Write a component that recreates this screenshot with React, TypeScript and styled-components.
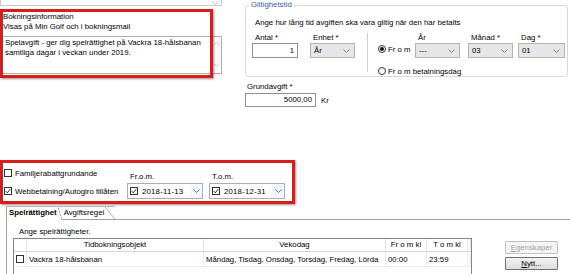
import React from 'react'
import styled, { createGlobalStyle } from 'styled-components'

const GlobalStyle = createGlobalStyle`
  html, body { margin: 0; padding: 0; background: #fff; }
  body {
    font-family: "Liberation Sans", Arial, sans-serif;
    font-size: 7.8px;
    color: #000;
  }
  * { box-sizing: border-box; }
`

const Page = styled.div`
  position: relative;
  width: 570px;
  height: 274px;
  overflow: hidden;
  background: #fff;
`

const TopArea = styled.div`
  display: flex;
  height: 160px;
`

const InfoColumn = styled.div`
  position: relative;
  width: 222px;
  display: flex;
  flex-direction: column;
`

const Stub = styled.div`
  height: 6px;
  border: 1px solid #c9cbd0;
  border-top: none;
  display: flex;
  justify-content: flex-end;
  align-items: center;
  padding-right: 2px;
`

const InfoLabels = styled.div`
  margin-top: 6px;
  padding-left: 3px;
`

const Line = styled.div`
  height: 10px;
  line-height: 10px;
  white-space: nowrap;
`

const TextArea = styled.div`
  margin-top: 4px;
  height: 38px;
  border: 1px solid #abadb3;
  display: flex;
`

const TextBody = styled.div`
  flex: 1;
  padding: 1px 4px;
  line-height: 10px;
`

const ScrollBar = styled.div`
  width: 10px;
  display: flex;
  flex-direction: column;
  justify-content: space-between;
  align-items: center;
  padding: 5px 0 6px;
`

const Highlight = styled.div<{ $top: number; $width: number; $height: number }>`
  position: absolute;
  top: ${p => p.$top}px;
  left: 0;
  width: ${p => p.$width}px;
  height: ${p => p.$height}px;
  border: 3px solid #d81d1d;
  box-shadow: 1px 1px 2px rgba(60, 0, 0, 0.45);
  pointer-events: none;
`

const SettingsColumn = styled.div`
  margin-left: 23px;
  width: 323px;
`

const Group = styled.fieldset`
  margin: 0;
  padding: 0 0 0 6px;
  min-width: 0;
  height: 77px;
  border: 1px solid #d8d8d8;
  border-radius: 3px;
`

const GroupTitle = styled.legend`
  margin-left: -3px;
  padding: 0 2px;
  line-height: 10px;
  color: #3561a8;
`

const Intro = styled.div`
  margin-top: 8px;
  padding-left: 3px;
  line-height: 10px;
  white-space: nowrap;
`

const FieldRow = styled.div`
  display: flex;
  align-items: flex-start;
  margin-top: 5px;
`

const Field = styled.div<{ $width: number; $gap?: number }>`
  display: flex;
  flex-direction: column;
  width: ${p => p.$width}px;
  margin-left: ${p => p.$gap ?? 0}px;
`

const FieldLabel = styled.div`
  height: 10px;
  line-height: 10px;
  padding-left: 3px;
  white-space: nowrap;
`

const TextInput = styled.div<{ $height?: number }>`
  height: ${p => p.$height ?? 15}px;
  border: 1px solid #8e9096;
  background: #fff;
  text-align: right;
  padding-right: 3px;
  line-height: ${p => (p.$height ?? 15) - 2}px;
`

const Select = styled.div`
  height: 15px;
  border: 1px solid #b3b3b3;
  background: #e6e6e6;
  display: flex;
  align-items: center;
  justify-content: space-between;
  padding: 0 4px 0 3px;
`

const Divider = styled.div`
  width: 1px;
  height: 39px;
  margin-left: 12px;
  background: #d0d0d0;
`

const RadioArea = styled.div`
  display: flex;
  flex-direction: column;
  margin-left: 10px;
`

const RadioLine = styled.div`
  display: flex;
  align-items: flex-end;
`

const RadioOption = styled.div<{ $width?: number }>`
  display: flex;
  align-items: center;
  gap: 2px;
  height: 15px;
  padding-bottom: 3px;
  width: ${p => (p.$width ? `${p.$width}px` : 'auto')};
  white-space: nowrap;
`

const RadioSecond = styled(RadioOption)`
  margin-top: 8px;
  height: 10px;
  padding-bottom: 0;
`

const RadioDot = styled.span<{ $on?: boolean }>`
  width: 8px;
  height: 8px;
  border: 1px solid #333;
  border-radius: 50%;
  display: flex;
  align-items: center;
  justify-content: center;
  background: #fff;
  &::after {
    content: '';
    width: 4px;
    height: 4px;
    border-radius: 50%;
    background: ${p => (p.$on ? '#111' : 'transparent')};
  }
`

const BaseFee = styled.div`
  margin-top: 5px;
`

const BaseLabel = styled.div`
  line-height: 10px;
  padding-left: 2px;
`

const BaseRow = styled.div`
  display: flex;
  align-items: center;
  margin-top: 1px;
  gap: 5px;
`

const OptionsArea = styled.div`
  position: relative;
  height: 46px;
  display: flex;
  padding: 8px 0 0 4px;
`

const CheckColumn = styled.div`
  width: 123px;
  display: flex;
  flex-direction: column;
  gap: 8px;
`

const CheckLine = styled.div`
  height: 10px;
  display: flex;
  align-items: center;
  gap: 3px;
  white-space: nowrap;
`

const Box = styled.span`
  width: 8px;
  height: 8px;
  flex: none;
  border: 1px solid #333;
  background: #fff;
  display: flex;
  align-items: center;
  justify-content: center;
`

const DateField = styled.div<{ $gap?: number }>`
  width: 76px;
  margin-left: ${p => p.$gap ?? 0}px;
  display: flex;
  flex-direction: column;
`

const DateLabel = styled.div`
  margin-top: 4px;
  line-height: 10px;
  padding-left: 3px;
`

const DatePicker = styled.div`
  margin-top: 1px;
  height: 16px;
  border: 1px solid #abadb3;
  display: flex;
  align-items: center;
  gap: 4px;
  padding-left: 2px;
  letter-spacing: 0.2px;
`

const DropButton = styled.span`
  margin-left: auto;
  width: 12px;
  height: 14px;
  display: flex;
  align-items: center;
  justify-content: center;
  background: #f4f7fb;
`

const TabStrip = styled.div`
  display: flex;
  align-items: flex-end;
  height: 13px;
  padding-left: 6px;
`

const Tab = styled.div<{ $active?: boolean; $slant: number }>`
  position: relative;
  height: ${p => (p.$active ? 14 : 13)}px;
  margin-bottom: ${p => (p.$active ? -1 : 0)}px;
  line-height: 12px;
  padding: 0 ${p => p.$slant + 1}px 0 2px;
  font-weight: ${p => (p.$active ? 700 : 400)};
  background: #fff;
  border-top: 1px solid #b4b4b4;
  border-left: ${p => (p.$active ? '1px solid #a0a0a0' : 'none')};
  white-space: nowrap;
  &::after {
    content: '';
    position: absolute;
    top: 0;
    right: 0;
    width: ${p => p.$slant}px;
    height: 100%;
    background: linear-gradient(to top right, transparent calc(50% - 0.6px), #9a9a9a, transparent calc(50% + 0.6px));
  }
`

const Panel = styled.div`
  margin-left: 6px;
  height: 60px;
  border-top: 1px solid #a0a0a0;
  border-left: 1px solid #a0a0a0;
  padding: 7px 0 0 6px;
`

const PanelIntro = styled.div`
  margin-left: 6px;
  line-height: 10px;
`

const GridRow = styled.div`
  display: flex;
  margin-top: 1px;
`

const Grid = styled.div`
  width: 459px;
  height: 50px;
  border: 1px solid #828790;
  border-bottom: none;
`

const columns = '13px 177px 182px 41px 41px 1fr'

const HeaderRow = styled.div`
  display: grid;
  grid-template-columns: ${columns};
  height: 13px;
  border-bottom: 1px solid #d5d5d5;
`

const HeaderCell = styled.div`
  text-align: center;
  line-height: 12px;
  border-right: 1px solid #e2e2e2;
  white-space: nowrap;
  overflow: hidden;
`

const DataRow = styled.div`
  display: grid;
  grid-template-columns: ${columns};
  height: 15px;
`

const DataCell = styled.div<{ $center?: boolean }>`
  display: flex;
  align-items: center;
  justify-content: ${p => (p.$center ? 'center' : 'flex-start')};
  padding-left: ${p => (p.$center ? 0 : 2)}px;
  border-right: 1px solid #ececec;
  border-bottom: 1px solid #ececec;
  white-space: nowrap;
  overflow: hidden;
`

const ButtonColumn = styled.div`
  margin-left: 33px;
  padding-top: 3px;
  width: 53px;
  display: flex;
  flex-direction: column;
  gap: 3px;
`

const Button = styled.div<{ $disabled?: boolean }>`
  height: 13px;
  line-height: 11px;
  text-align: center;
  border: 1px solid ${p => (p.$disabled ? '#c2c2c2' : '#707070')};
  color: ${p => (p.$disabled ? '#a2a2a2' : '#000')};
  background: ${p => (p.$disabled ? '#f4f4f4' : 'linear-gradient(#f3f3f3, #dcdcdc)')};
  border-radius: 1px;
`

const Chevron = ({ color = '#7a7a7a', up = false }: { color?: string; up?: boolean }) => (
  <svg width="7" height="4" viewBox="0 0 7 4">
    <path d={up ? 'M0.5 3.5 L3.5 0.5 L6.5 3.5' : 'M0.5 0.5 L3.5 3.5 L6.5 0.5'} stroke={color} strokeWidth="1" fill="none" />
  </svg>
)

const Check = ({ on }: { on?: boolean }) => (
  <Box>
    {on && (
      <svg width="6" height="6" viewBox="0 0 6 6">
        <path d="M0.6 3 L2.3 4.8 L5.4 0.9" stroke="#222" strokeWidth="0.9" fill="none" />
      </svg>
    )}
  </Box>
)

const SelectBox = ({ value }: { value: string }) => (
  <Select>
    <span>{value}</span>
    <Chevron />
  </Select>
)

const App = () => {
  return (
    <Page>
      <GlobalStyle />
      <TopArea>
        <InfoColumn>
          <Stub>
            <Chevron color="#b8b8b8" />
          </Stub>
          <InfoLabels>
            <Line>Bokningsinformation</Line>
            <Line>Visas på Min Golf och i bokningsmail</Line>
          </InfoLabels>
          <TextArea>
            <TextBody>
              Spelavgift - ger dig spelrättighet på Vackra 18-hålsbanan
              <br />
              samtliga dagar i veckan under 2019.
            </TextBody>
            <ScrollBar>
              <Chevron color="#c4c4c4" up />
              <Chevron color="#c4c4c4" />
            </ScrollBar>
          </TextArea>
          <Highlight $top={9} $width={213} $height={69} />
        </InfoColumn>

        <SettingsColumn>
          <Group>
            <GroupTitle>Giltighetstid</GroupTitle>
            <Intro>Ange hur lång tid avgiften ska vara giltig när den har betalts</Intro>
            <FieldRow>
              <Field $width={46}>
                <FieldLabel>Antal *</FieldLabel>
                <TextInput>1</TextInput>
              </Field>
              <Field $width={45} $gap={12}>
                <FieldLabel>Enhet *</FieldLabel>
                <SelectBox value="År" />
              </Field>
              <Divider />
              <RadioArea>
                <RadioLine>
                  <RadioOption $width={37}>
                    <RadioDot $on />
                    <span>Fr o m</span>
                  </RadioOption>
                  <Field $width={45}>
                    <FieldLabel>År</FieldLabel>
                    <SelectBox value="---" />
                  </Field>
                  <Field $width={45} $gap={8}>
                    <FieldLabel>Månad *</FieldLabel>
                    <SelectBox value="03" />
                  </Field>
                  <Field $width={47} $gap={5}>
                    <FieldLabel>Dag *</FieldLabel>
                    <SelectBox value="01" />
                  </Field>
                </RadioLine>
                <RadioSecond>
                  <RadioDot />
                  <span>Fr o m betalningsdag</span>
                </RadioSecond>
              </RadioArea>
            </FieldRow>
          </Group>

          <BaseFee>
            <BaseLabel>Grundavgift *</BaseLabel>
            <BaseRow>
              <Field $width={71}>
                <TextInput $height={14}>5000,00</TextInput>
              </Field>
              <span>Kr</span>
            </BaseRow>
          </BaseFee>
        </SettingsColumn>
      </TopArea>

      <OptionsArea>
        <CheckColumn>
          <CheckLine>
            <Check />
            <span>Familjerabattgrundande</span>
          </CheckLine>
          <CheckLine>
            <Check on />
            <span>Webbetalning/Autogiro tillåten</span>
          </CheckLine>
        </CheckColumn>
        <DateField>
          <DateLabel>Fr.o.m.</DateLabel>
          <DatePicker>
            <Check on />
            <span>2018-11-13</span>
            <DropButton>
              <Chevron color="#3e6db3" />
            </DropButton>
          </DatePicker>
        </DateField>
        <DateField $gap={6}>
          <DateLabel>T.o.m.</DateLabel>
          <DatePicker>
            <Check on />
            <span>2018-12-31</span>
            <DropButton>
              <Chevron color="#3e6db3" />
            </DropButton>
          </DatePicker>
        </DateField>
        <Highlight $top={0} $width={295} $height={44} />
      </OptionsArea>

      <TabStrip>
        <Tab $active $slant={4}>Spelrättighet</Tab>
        <Tab $slant={10}>Avgiftsregel</Tab>
      </TabStrip>
      <Panel>
        <PanelIntro>Ange spelrättigheter.</PanelIntro>
        <GridRow>
          <Grid>
            <HeaderRow>
              <HeaderCell />
              <HeaderCell>Tidbokningsobjekt</HeaderCell>
              <HeaderCell>Vekodag</HeaderCell>
              <HeaderCell>Fr o m kl</HeaderCell>
              <HeaderCell>T o m kl</HeaderCell>
              <HeaderCell />
            </HeaderRow>
            <DataRow>
              <DataCell $center>
                <Check />
              </DataCell>
              <DataCell>Vackra 18-hålsbanan</DataCell>
              <DataCell>Måndag, Tisdag, Onsdag, Torsdag, Fredag, Lörda</DataCell>
              <DataCell>00:00</DataCell>
              <DataCell>23:59</DataCell>
              <DataCell />
            </DataRow>
          </Grid>
          <ButtonColumn>
            <Button $disabled>
              <u>E</u>genskaper
            </Button>
            <Button>
              <u>N</u>ytt...
            </Button>
          </ButtonColumn>
        </GridRow>
      </Panel>
    </Page>
  )
}

export default App
